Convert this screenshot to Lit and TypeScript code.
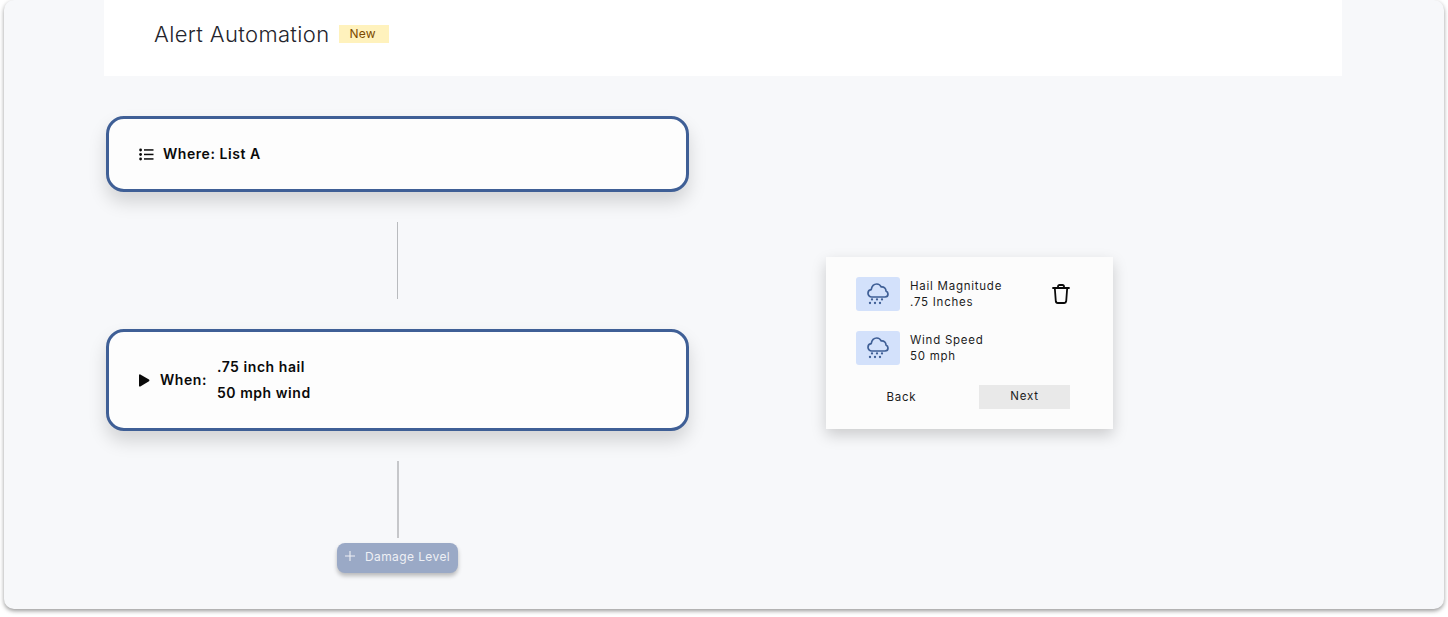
import { LitElement, html, css, svg } from "lit";
import { customElement } from "lit/decorators.js";

const cloud = html`<svg class="cloud" viewBox="0 0 24 24" width="24" height="24" fill="none" stroke="#3f5f96" stroke-width="1.7" stroke-linecap="round" stroke-linejoin="round">
  <path d="M5.8 15C3.6 15 2 13.3 2 11.3 2 9.3 3.4 7.8 5.2 7.6 5.8 4.4 8 2 10.8 2c2 0 3.6 1.2 4.4 3 2.8-.4 4.8 1.6 4.8 4 1.2.6 2 1.8 2 3 0 1.7-1.3 3-3 3z"/>
  ${[[6,17.4],[11,17.4],[16,17.4],[4,21],[9,21],[14,21]].map(([x,y])=>svg`<circle cx="${x}" cy="${y}" r="1.15" fill="#3f5f96" stroke="none"/>`)}
</svg>`;

@customElement("app-root")
export class AppRoot extends LitElement {
  static styles = css`
    :host { display: block; width: 1448px; height: 617px; background: #fff; font-family: Inter, "Liberation Sans", sans-serif; overflow: hidden; }
    .panel { box-sizing: border-box; width: 1440px; height: 609px; margin-left: 4px; background: #f7f8fa; border-radius: 10px; box-shadow: 0 2px 4px rgba(0,0,0,.4); padding-left: 100px; }
    .header { box-sizing: border-box; width: 1238px; height: 76px; background: #fff; padding: 0 0 8px 50px; display: flex; align-items: center; gap: 10px; }
    .title { font-size: 22px; font-weight: 300; letter-spacing: .35px; color: #23242c; line-height: 28px; }
    .badge { box-sizing: border-box; width: 50px; height: 18px; padding-left: 10px; background: #fff2bd; color: #7b4a00; font-size: 12px; line-height: 18px; letter-spacing: .2px; }
    .main { display: flex; padding: 40px 0 0 2px; }
    .flow { width: 583px; display: flex; flex-direction: column; align-items: center; }
    .card { box-sizing: border-box; width: 583px; background: #fdfdfd; border: 3px solid #3f5f96; border-radius: 18px; box-shadow: 0 10px 18px rgba(0,0,0,.15); display: flex; align-items: center; padding-left: 29px; font-size: 14px; font-weight: 600; color: #0a0a0a; letter-spacing: .55px; }
    .where { height: 76px; gap: 10px; }
    .where svg { margin-left: 1px; margin-right: -1px; }
    .when { height: 102px; }
    .label { padding-bottom: 2px; }
    .line { width: 1px; height: 77px; background: #b9bbbe; margin: 30px 0; }
    .line.short { width: 2px; background: #c6c7ca; margin-bottom: 5px; }
    .play { margin-right: 10px; }
    .vals { display: flex; flex-direction: column; gap: 8px; margin-left: 10px; line-height: 18px; }
    .add { box-sizing: border-box; width: 121px; height: 30px; border-radius: 8px; background: #9aa9c6; box-shadow: 0 3px 4px rgba(0,0,0,.25); display: flex; align-items: center; padding: 0 0 4px 7px; gap: 9px; color: #eef0f5; font-size: 12px; letter-spacing: .4px; }
    .popup { box-sizing: border-box; width: 287px; height: 172px; margin: 141px 0 0 137px; background: #fcfcfc; box-shadow: 0 6px 14px rgba(0,0,0,.18); padding: 20px 43px 20px 30px; display: flex; flex-direction: column; }
    .row { display: flex; align-items: center; gap: 10px; height: 34px; margin-bottom: 20px; }
    .tile { width: 44px; height: 34px; background: #d3e1fb; border-radius: 3px; display: flex; align-items: center; justify-content: center; }
    .txt { font-size: 11.5px; line-height: 16px; letter-spacing: .75px; color: #1c1c1c; padding-bottom: 1px; }
    .trash { margin-left: auto; margin-right: -1px; }
    .actions { display: flex; justify-content: space-between; align-items: center; font-size: 11.5px; letter-spacing: .75px; color: #1c1c1c; }
    .back { width: 91px; text-align: center; margin-bottom: 1px; }
    .next { width: 91px; height: 24px; line-height: 23px; text-align: center; background: #e9e9e9; }
  `;

  render() {
    return html`<div class="panel">
      <div class="header"><span class="title">Alert Automation</span><span class="badge">New</span></div>
      <div class="main">
        <div class="flow">
          <div class="card where">
            <svg width="15" height="13" viewBox="0 0 15 13" fill="#0a0a0a"><circle cx="1.6" cy="2" r="1.4"/><circle cx="1.6" cy="6.5" r="1.4"/><circle cx="1.6" cy="11" r="1.4"/><rect x="5" y="1.2" width="9.5" height="1.5"/><rect x="5" y="5.7" width="9.5" height="1.5"/><rect x="5" y="10.2" width="9.5" height="1.5"/></svg>
            <span class="label">Where: List A</span>
          </div>
          <div class="line"></div>
          <div class="card when">
            <svg class="play" width="12" height="13" viewBox="0 0 12 13" fill="#0a0a0a"><path d="M1 1.2c0-.7.7-1.1 1.3-.8l8.7 5.2c.6.4.6 1.3 0 1.7l-8.7 5.2c-.6.4-1.3-.1-1.3-.8z"/></svg>
            <span class="label">When:</span>
            <div class="vals"><span>.75 inch hail</span><span>50 mph wind</span></div>
          </div>
          <div class="line short"></div>
          <div class="add">
            <svg width="12" height="12" viewBox="0 0 12 12" stroke="#eef0f5" stroke-width="1.1"><path d="M6 1v10M1 6h10"/></svg>
            <span>Damage Level</span>
          </div>
        </div>
        <div class="popup">
          <div class="row">
            <div class="tile">${cloud}</div>
            <div class="txt">Hail Magnitude<br />.75 Inches</div>
            <svg class="trash" width="20" height="22" viewBox="0 0 20 22" fill="none" stroke="#0a0a0a" stroke-width="1.8" stroke-linecap="round" stroke-linejoin="round"><path d="M2 5h16M7 5V3.6C7 2.7 7.7 2 8.6 2h2.8c.9 0 1.6.7 1.6 1.6V5M3.8 5l1 13.2c.1 1 .9 1.8 1.9 1.8h6.6c1 0 1.8-.8 1.9-1.8L16.2 5"/></svg>
          </div>
          <div class="row">
            <div class="tile">${cloud}</div>
            <div class="txt">Wind Speed<br />50 mph</div>
          </div>
          <div class="actions"><span class="back">Back</span><span class="next">Next</span></div>
        </div>
      </div>
    </div>`;
  }
}
